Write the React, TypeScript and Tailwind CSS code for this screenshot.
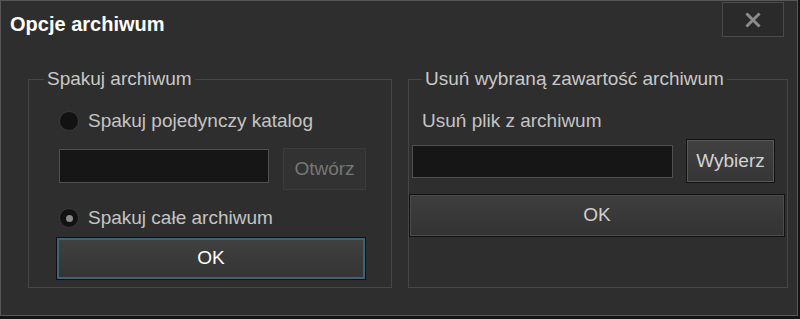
import React, { useState } from 'react';

const font = { fontFamily: '"Liberation Sans", Arial, sans-serif' };

const Radio: React.FC<{ checked: boolean; label: string; onClick: () => void }> = ({ checked, label, onClick }) => (
  <div className="flex items-center gap-[9px] h-[22px] cursor-default" onClick={onClick}>
    <span className="w-[20px] h-[20px] rounded-full bg-[#121212] border border-[#3a3a3a] flex items-center justify-center shrink-0">
      {checked && <span className="w-[7px] h-[7px] rounded-full bg-[#8a8a8a]" />}
    </span>
    <span className="text-[19px] leading-[22px] text-[#c4c4c4]">{label}</span>
  </div>
);

const App: React.FC = () => {
  const [mode, setMode] = useState<'single' | 'all'>('all');

  return (
    <div className="w-[800px] h-[319px] bg-[#141414]" style={font}>
      <div className="w-[798px] h-[316px] border border-[#575757] bg-[#2e2e2e] flex flex-col">
        {/* Title bar */}
        <div className="h-[40px] flex items-start justify-between shrink-0">
          <h1 className="pl-[9px] pt-[11px] text-[20px] leading-[24px] font-bold text-white">Opcje archiwum</h1>
          <button className="mt-[1px] mr-[13px] w-[62px] h-[35px] border border-[#4a4a4a] bg-[#2a2a2a] flex items-center justify-center">
            <svg width="16" height="16" viewBox="0 0 16 16">
              <path d="M2.5 2.5 L13.5 13.5 M13.5 2.5 L2.5 13.5" stroke="#8c8c8c" strokeWidth="3" strokeLinecap="square" />
            </svg>
          </button>
        </div>

        {/* Groups */}
        <div className="flex gap-[16px] pl-[27px] mt-[27px]">
          <fieldset className="w-[364px] h-[220px] border border-[#464646] m-0 p-0 pl-[30px]">
            <legend className="ml-[-15px] px-[3px] text-[19px] leading-[22px] text-[#c8c8c8]">Spakuj archiwum</legend>
            <div className="mt-[20px] flex flex-col">
              <Radio checked={mode === 'single'} label="Spakuj pojedynczy katalog" onClick={() => setMode('single')} />
              <div className="mt-[16px] flex items-start gap-[14px]">
                <div className="mt-[1px] w-[210px] h-[34px] bg-[#161616] border border-[#505050]" />
                <button className="w-[83px] h-[42px] bg-[#323232] border border-[#3c3c3c] text-[19px] text-[#777777]">Otwórz</button>
              </div>
              <div className="mt-[17px]">
                <Radio checked={mode === 'all'} label="Spakuj całe archiwum" onClick={() => setMode('all')} />
              </div>
              <button className="mt-[8px] ml-[-3px] w-[310px] h-[43px] border border-[#101010] p-0">
                <span className="w-full h-full flex items-center justify-center border-2 border-[#3a6478] bg-gradient-to-b from-[#404040] to-[#343434] text-[19px] text-white">OK</span>
              </button>
            </div>
          </fieldset>

          <fieldset className="w-[380px] h-[220px] border border-[#464646] m-0 p-0">
            <legend className="ml-[13px] px-[3px] text-[19px] leading-[22px] text-[#c8c8c8]">Usuń wybraną zawartość archiwum</legend>
            <div className="mt-[20px] flex flex-col">
              <div className="pl-[13px] h-[22px] text-[19px] leading-[22px] text-[#c4c4c4]">Usuń plik z archiwum</div>
              <div className="mt-[7px] pl-[3px] flex items-center gap-[13px]">
                <div className="w-[261px] h-[33px] bg-[#161616] border border-[#505050]" />
                <button className="w-[89px] h-[44px] border border-[#121212] p-0">
                  <span className="w-full h-full flex items-center justify-center border border-[#585858] bg-gradient-to-b from-[#404040] to-[#363636] text-[19px] text-[#d2d2d2]">Wybierz</span>
                </button>
              </div>
              <button className="mt-[11px] w-[376px] h-[43px] border border-[#121212] p-0">
                <span className="w-full h-full flex items-center justify-center border border-[#4c4c4c] bg-gradient-to-b from-[#3e3e3e] to-[#333333] text-[19px] text-[#cfcfcf]">OK</span>
              </button>
            </div>
          </fieldset>
        </div>
      </div>
    </div>
  );
};

export default App;
